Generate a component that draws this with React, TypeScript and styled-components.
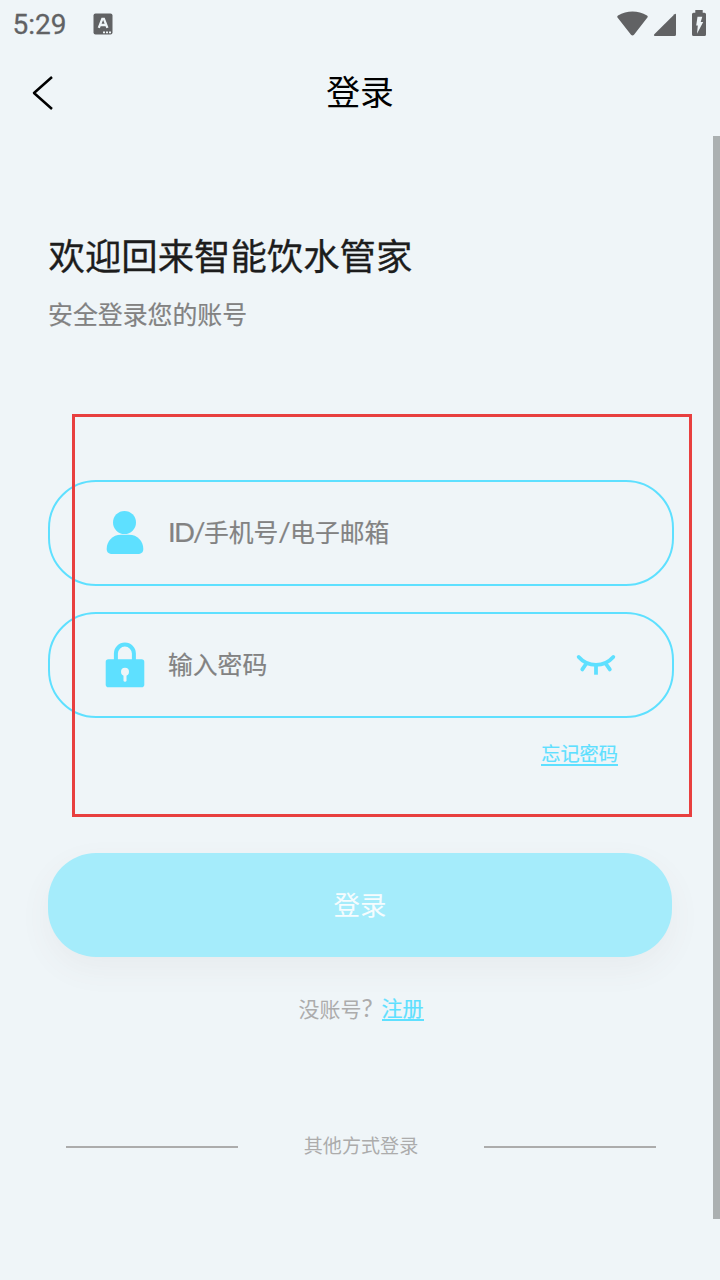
import React from "react";
import styled, { createGlobalStyle } from "styled-components";

const cyan = "#5ee0ff";
const grey = "#616264";

const GlobalStyle = createGlobalStyle`
  * { box-sizing: border-box; }
  body {
    margin: 0;
    background: #eff5f8;
    font-family: "Noto Sans CJK SC", "Noto Sans", sans-serif;
  }
`;

const Screen = styled.div`
  position: relative;
  width: 720px;
  height: 1280px;
  overflow: hidden;
  display: flex;
  flex-direction: column;
  background: #eff5f8;
`;

const StatusBar = styled.div`
  height: 48px;
  padding: 0 12px 1px 12.5px;
  display: flex;
  align-items: center;
  color: ${grey};
`;

const Clock = styled.span`
  font: 400 28px/48px Roboto, sans-serif;
  -webkit-text-stroke: 0.3px ${grey};
  padding-top: 3px;
  margin-right: 26.5px;
`;

const StatusIcons = styled.div`
  margin-left: auto;
  display: flex;
`;

const NavBar = styled.header`
  height: 88px;
  padding: 0 30px;
  display: grid;
  grid-template-columns: 60px 1fr 60px;
  align-items: center;
`;

const BackButton = styled.button`
  display: flex;
  padding: 1px 0 0;
  border: 0;
  background: none;
`;

const NavTitle = styled.h1`
  margin: 0 0 3px;
  font-size: 33.8px;
  font-weight: 400;
  line-height: 48px;
  text-align: center;
  color: #000;
`;

const Content = styled.main`
  display: flex;
  flex-direction: column;
  padding: 93px 48px 0;
`;

const Welcome = styled.h2`
  margin: 0 0 0 0.5px;
  font-size: 36.4px;
  font-weight: 400;
  line-height: 50px;
  color: #1d1d1d;
  -webkit-text-stroke: 0.3px #1d1d1d;
`;

const Subtitle = styled.p`
  margin: 16px 0 0;
  font-size: 24.9px;
  line-height: 36px;
  color: #828282;
  -webkit-text-stroke: 0.2px #828282;
`;

const Form = styled.form`
  position: relative;
  width: 626px;
  height: 373px;
  margin-top: 149px;
  display: flex;
  flex-direction: column;
`;

const Field = styled.label`
  height: 106px;
  margin-bottom: 26px;
  padding: 0 56px 0 55px;
  display: flex;
  align-items: center;
  border: 2px solid ${cyan};
  border-radius: 48px;
`;

const Placeholder = styled.span`
  flex: 1;
  margin-left: 23px;
  padding-bottom: 4px;
  font-size: 24.8px;
  line-height: 36px;
  color: #828282;
  -webkit-text-stroke: 0.2px #828282;
`;

const Latin = styled.span<{ $size: number; $track: number }>`
  font-family: Lato, sans-serif;
  font-size: ${(p) => p.$size}px;
  letter-spacing: ${(p) => p.$track}px;
  line-height: 1;
`;

const LinkText = styled.a<{ $size: number; $line: number }>`
  font-size: ${(p) => p.$size}px;
  line-height: ${(p) => p.$line}px;
  height: 26px;
  color: ${cyan};
  border-bottom: 2px solid ${cyan};
  -webkit-text-stroke: 0.2px ${cyan};
`;

const ForgotRow = styled.div`
  display: flex;
  justify-content: flex-end;
  margin-top: -4px;
  padding-right: 56px;
`;

const Highlight = styled.div`
  position: absolute;
  left: 23.5px;
  top: -66.5px;
  width: 620px;
  height: 403px;
  border: 3px solid #e83f3f;
  pointer-events: none;
`;

const Submit = styled.button`
  height: 104px;
  padding: 0 0 4px;
  border: 0;
  border-radius: 48px;
  background: #a5ecfb;
  box-shadow: 0 12px 32px rgba(120, 80, 80, 0.06);
  color: #f6fcfe;
  font-family: inherit;
  font-size: 26.4px;
`;

const RegisterRow = styled.p`
  margin: 38px 0 0 2px;
  display: flex;
  justify-content: center;
  font-size: 21px;
  line-height: 24px;
  color: #acacac;
`;

const Question = styled.span`
  margin-right: 8px;
`;

const OtherWays = styled.div`
  margin: 110px 16px 0 18px;
  display: flex;
  align-items: center;
  justify-content: space-between;
  font-size: 19.1px;
  line-height: 28px;
  color: #acacac;
`;

const Rule = styled.div`
  width: 172px;
  height: 2px;
  margin-top: 4px;
  background: #acacac;
`;

const Scrollbar = styled.div`
  position: absolute;
  top: 136px;
  right: 0;
  width: 7px;
  height: 1083px;
  background: #abb0b1;
`;

const InputBadge = () => (
  <svg width="20" height="22" viewBox="0 0 20 22">
    <rect x="0.5" y="0.5" width="19" height="21" rx="2" fill={grey} />
    <path d="M5.8 14.8 9.3 5.8h1.6l3.5 9M7.3 12h5.6" fill="none" stroke="#eff5f8" strokeWidth="2.3" />
    <path d="M10 18.5h2v1.7h-2zm3 0h2v1.7h-2zm3 0h2v1.7h-2z" fill="#eff5f8" />
  </svg>
);

const SystemIcons = () => (
  <svg width="91" height="27" viewBox="617 10 91 27" fill={grey}>
    <path d="M617.3 17.3Q617 16.2 618 15.5C627 10.2 638 10.2 647 15.5Q648.2 16.2 647.6 17.3L634 34.7Q632.5 36.2 631 34.7Z" />
    <path d="M654.3 34.3 674.5 14.2Q676 13.2 676 15V34.5Q676 36 674.5 36H655Q653.2 36 654.3 34.3Z" />
    <path d="M695.3 10h7.4v2.7h1.8q1.5 0 1.5 1.5v20.3q0 1.5-1.5 1.5h-11q-1.5 0-1.5-1.5V14.2q0-1.5 1.5-1.5h1.8z" />
    <path d="M697.5 16.7h4.8l-1.6 5.4h2.5L697 33.8l.8-8.3h-1.6z" fill="#eff5f8" />
  </svg>
);

const UserIcon = () => (
  <svg width="40" height="46" viewBox="105 510 40 46" fill={cyan}>
    <circle cx="124.5" cy="522.5" r="11.5" />
    <path d="M121 534.7h8c8.5 0 14.3 6.3 14.3 14.2 0 3.6-2.2 5-5.6 5h-25.4c-3.4 0-5.6-1.4-5.6-5 0-7.9 5.8-14.2 14.3-14.2z" />
  </svg>
);

const LockIcon = () => (
  <svg width="40" height="46" viewBox="105 642 40 46">
    <path d="M115.9 661v-7.4a9 9 0 0 1 18 0v7.4" fill="none" stroke={cyan} strokeWidth="4" />
    <rect x="105.7" y="659.2" width="38.6" height="28" rx="2.8" fill={cyan} />
    <circle cx="125" cy="671.8" r="4" fill="#eff5f8" />
    <path d="M125 673v7.2" stroke="#eff5f8" strokeWidth="3" strokeLinecap="round" />
  </svg>
);

const ClosedEyeIcon = () => (
  <svg width="40" height="22" viewBox="576 654 40 22" fill="none" stroke={cyan} strokeWidth="3.8" strokeLinecap="round">
    <path d="M578.7 657C588 667.5 604 667.5 613.3 657" />
    <path d="M586 664 582.3 669.4M606 664l3.8 5.4" />
    <path d="M596 665v9.7" strokeLinecap="butt" />
  </svg>
);

export default function App() {
  return (
    <Screen>
      <GlobalStyle />
      <StatusBar>
        <Clock>5:29</Clock>
        <InputBadge />
        <StatusIcons>
          <SystemIcons />
        </StatusIcons>
      </StatusBar>
      <NavBar>
        <BackButton type="button" aria-label="返回">
          <svg width="24" height="36" viewBox="30 75 24 36" fill="none" stroke="#000" strokeWidth="2.5" strokeLinejoin="round">
            <path d="M52 77 34 93l18 16" />
          </svg>
        </BackButton>
        <NavTitle>登录</NavTitle>
      </NavBar>
      <Content>
        <Welcome>欢迎回来智能饮水管家</Welcome>
        <Subtitle>安全登录您的账号</Subtitle>
        <Form>
          <Field>
            <UserIcon />
            <Placeholder>
              <Latin $size={27.5} $track={-1.6}>ID/</Latin>手机号<Latin $size={27.5} $track={-0.7}>/</Latin>电子邮箱
            </Placeholder>
          </Field>
          <Field>
            <LockIcon />
            <Placeholder>输入密码</Placeholder>
            <ClosedEyeIcon />
          </Field>
          <ForgotRow>
            <LinkText $size={19.2} $line={27}>忘记密码</LinkText>
          </ForgotRow>
          <Highlight />
        </Form>
        <Submit type="button">登录</Submit>
        <RegisterRow>
          <Question>没账号<Latin $size={25} $track={1}>?</Latin></Question>
          <LinkText $size={21} $line={25}>注册</LinkText>
        </RegisterRow>
        <OtherWays>
          <Rule />
          <span>其他方式登录</span>
          <Rule />
        </OtherWays>
      </Content>
      <Scrollbar />
    </Screen>
  );
}
